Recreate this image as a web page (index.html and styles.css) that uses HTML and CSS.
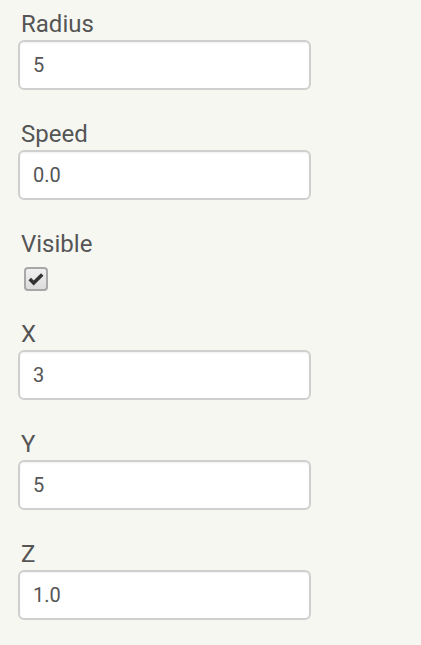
FILE: index.html
```html
<!DOCTYPE html>
<html>
<head>
<meta charset="utf-8">
<link rel="stylesheet" href="styles.css">
</head>
<body>
<form class="form">
  <div class="group">
    <label class="label">Radius</label>
    <input class="field" type="text" value="5">
  </div>
  <div class="group">
    <label class="label">Speed</label>
    <input class="field" type="text" value="0.0">
  </div>
  <div class="group check-group">
    <label class="label">Visible</label>
    <span class="checkbox">
      <svg viewBox="0 0 24 24" width="24" height="24"><path d="M4.5 12 L9.2 16.8 L19.5 6.5" fill="none" stroke="#333" stroke-width="4.2" stroke-linejoin="miter"/></svg>
    </span>
  </div>
  <div class="group">
    <label class="label">X</label>
    <input class="field" type="text" value="3">
  </div>
  <div class="group">
    <label class="label">Y</label>
    <input class="field" type="text" value="5">
  </div>
  <div class="group">
    <label class="label">Z</label>
    <input class="field" type="text" value="1.0">
  </div>
</form>
</body>
</html>
```
FILE: styles.css
```css
html, body {
  margin: 0;
  padding: 0;
  background: #f7f7f2;
}
body {
  font-family: Roboto, "Liberation Sans", sans-serif;
  color: #555;
}
.form {
  display: flex;
  flex-direction: column;
  padding: 11px 0 0 18px;
}
.group {
  display: flex;
  flex-direction: column;
  align-items: flex-start;
  margin-bottom: 31px;
}
.label {
  display: block;
  font-size: 24px;
  line-height: 26px;
  padding-left: 3px;
  margin-bottom: 3px;
  color: #555;
}
.field {
  box-sizing: border-box;
  width: 293px;
  height: 50px;
  padding: 0 13px;
  font-family: Roboto, "Liberation Sans", sans-serif;
  font-size: 20px;
  color: #555;
  background: #fff;
  border: 2px solid #cfcfcf;
  border-radius: 6px;
  box-shadow: inset 0 1px 2px rgba(0,0,0,0.06);
  outline: none;
}
.check-group {
  margin-bottom: 30px;
}
.check-group .label {
  margin-bottom: 10px;
}
.checkbox {
  box-sizing: border-box;
  display: flex;
  align-items: center;
  justify-content: center;
  width: 24px;
  height: 24px;
  margin-left: 6px;
  border: 2px solid #a8a8a8;
  border-radius: 4px;
  background: linear-gradient(#f0f0f0, #dcdcdc);
}
.checkbox svg {
  width: 20px;
  height: 20px;
}
```
